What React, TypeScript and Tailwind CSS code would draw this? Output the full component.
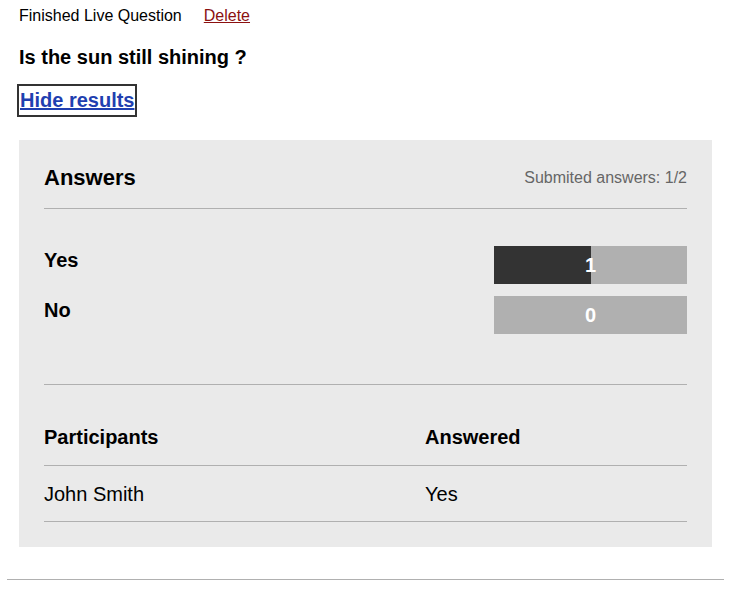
import React from "react";

const answers = [
  { label: "Yes", count: 1 },
  { label: "No", count: 0 },
];
const total = 2;

export default function App() {
  return (
    <div className="bg-white min-h-[598px] pl-[7px] pr-[8px] pt-[7px] text-black" style={{ fontFamily: '"Liberation Sans", Arial, sans-serif' }}>
      <div className="px-3">
        {/* Status line */}
        <div className="flex items-center gap-[22px] text-[16px] leading-[18px]">
          <span>Finished Live Question</span>
          <a href="#" className="text-[#8b1010] underline">Delete</a>
        </div>

        <h2 className="mt-[21px] text-[20px] leading-[23px] font-bold">Is the sun still shining ?</h2>

        <div className="mt-[15px] flex">
          <a href="#" className="-ml-[2px] px-[1px] border-2 border-[#333] text-[20px] leading-[29px] font-bold text-[#1f3fb0] underline">
            Hide results
          </a>
        </div>

        {/* Results panel */}
        <div className="mt-[23px] bg-[#eaeaea] px-[25px] pt-[25px] pb-[25px]">
          <div className="flex items-center justify-between pb-[17px] border-b border-[#b0b0b0]">
            <h3 className="text-[22px] leading-[26px] font-bold">Answers</h3>
            <span className="text-[16px] text-[#666]">Submited answers: 1/2</span>
          </div>

          <div className="pt-[37px] pb-[50px] flex flex-col gap-[12px] border-b border-[#b0b0b0]">
            {answers.map((a) => (
              <div key={a.label} className="flex items-start justify-between">
                <span className="text-[20px] leading-[28px] font-bold">{a.label}</span>
                <div className="relative w-[30%] h-[38px] bg-[#b0b0b0]">
                  <div className="absolute inset-y-0 left-0 bg-[#333]" style={{ width: `${(a.count / total) * 100}%` }} />
                  <span className="absolute inset-0 flex items-center justify-center text-white font-bold text-[20px]">
                    {a.count}
                  </span>
                </div>
              </div>
            ))}
          </div>

          {/* Participants table */}
          <div className="grid grid-cols-[381px_1fr] text-[20px]">
            <div className="pt-[40px] pb-[16px] font-bold border-b border-[#b0b0b0] leading-[24px]">Participants</div>
            <div className="pt-[40px] pb-[16px] font-bold border-b border-[#b0b0b0] leading-[24px]">Answered</div>
            <div className="pt-[16px] pb-[15px] border-b border-[#b0b0b0] leading-[24px]">John Smith</div>
            <div className="pt-[16px] pb-[15px] border-b border-[#b0b0b0] leading-[24px]">Yes</div>
          </div>
        </div>
      </div>

      <hr className="mt-[32px] border-t border-[#b0b0b0]" />
    </div>
  );
}
